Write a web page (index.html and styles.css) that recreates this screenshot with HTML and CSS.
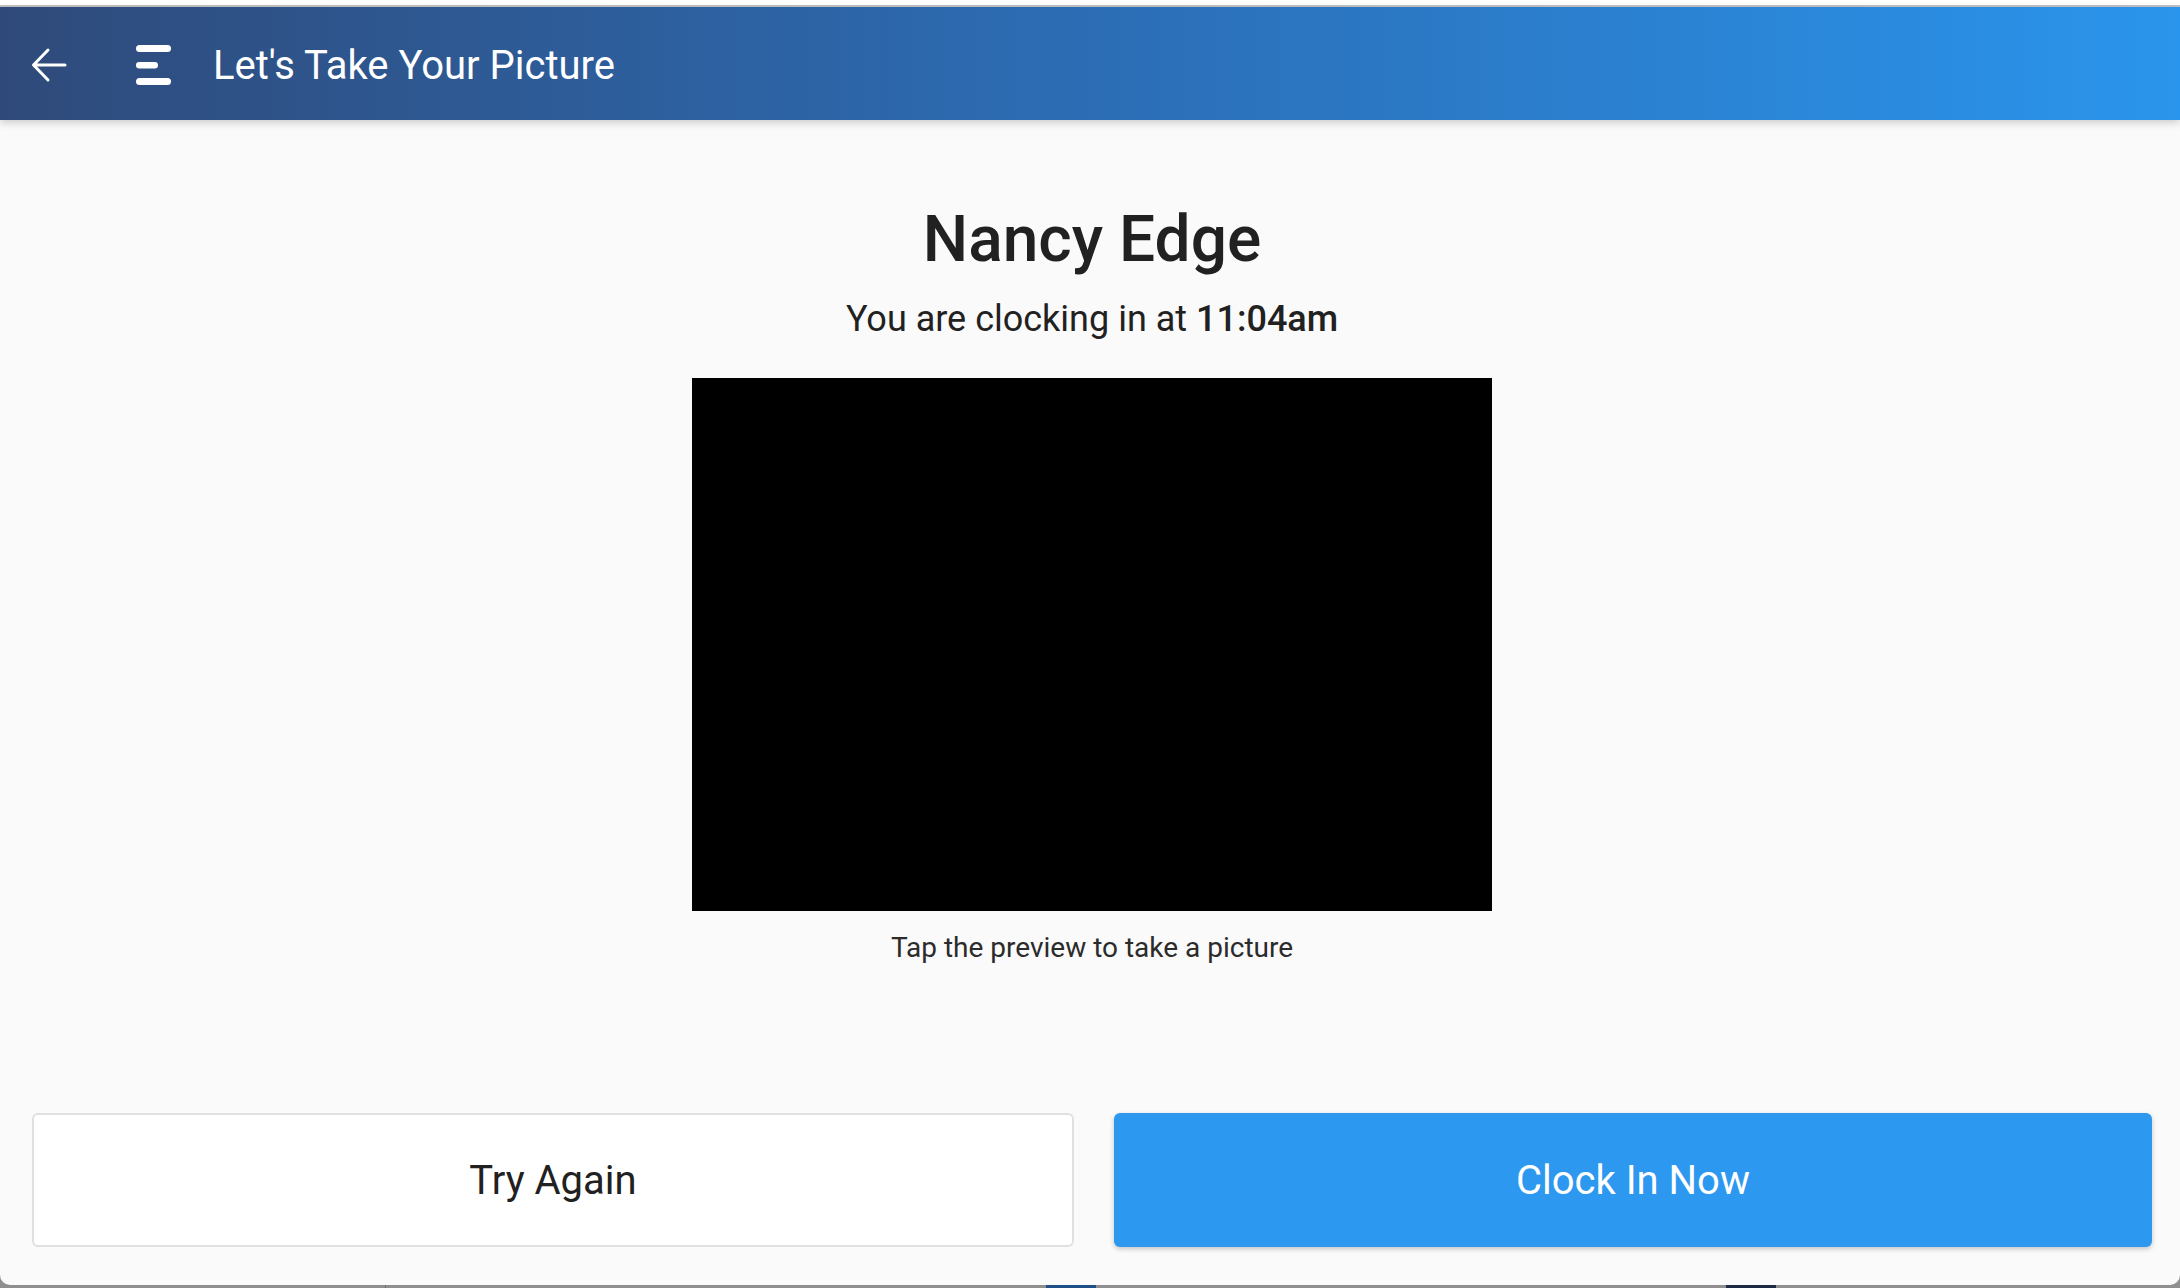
FILE: index.html
```html
<!DOCTYPE html>
<html lang="en">
<head>
    <meta charset="UTF-8">
    <meta name="viewport" content="width=device-width, initial-scale=1.0">
    <title>Let's Take Your Picture</title>
    <link rel="stylesheet" href="styles.css">
</head>
<body>
    <!-- Clock-in dialog, sits over the dashboard -->
    <div class="dialog">
        <header class="topbar">
            <button class="icon-btn back-btn" aria-label="Back">
                <svg width="36" height="36" viewBox="0 0 36 36">
                    <path d="M34 18H3M17 3L2.5 18L17 33" fill="none" stroke="#fff" stroke-width="3" stroke-linecap="round" stroke-linejoin="round"/>
                </svg>
            </button>
            <button class="icon-btn menu-btn" aria-label="Menu">
                <svg width="36" height="40" viewBox="0 0 36 40">
                    <rect x="0" y="0" width="35" height="7" rx="3.5" fill="#fff"/>
                    <rect x="0" y="17" width="22" height="6.5" rx="3.2" fill="#fff"/>
                    <rect x="0" y="33" width="35" height="7" rx="3.5" fill="#fff"/>
                </svg>
            </button>
            <h1 class="topbar-title">Let's Take Your Picture</h1>
        </header>

        <main class="content">
            <h2 class="employee-name">Nancy Edge</h2>
            <p class="clock-time">You are clocking in at <strong>11:04am</strong></p>

            <div class="preview" id="preview"></div>
            <p class="hint">Tap the preview to take a picture</p>
        </main>

        <footer class="actions">
            <button class="btn btn-secondary">Try Again</button>
            <button class="btn btn-primary">Clock In Now</button>
        </footer>
    </div>

    <!-- bit of the page behind the dialog -->
    <div class="backdrop">
        <span class="bd-line"></span>
        <span class="bd-block"></span>
        <span class="bd-block dark"></span>
    </div>
</body>
</html>
```

FILE: styles.css
```css
html, body {
    margin: 0;
    padding: 0;
}

body {
    font-family: Roboto, "Liberation Sans", Arial, sans-serif;
    background: #ffffff;
    color: #212121;
    width: 2180px;
    height: 1288px;
    overflow: hidden;
    display: flex;
    flex-direction: column;
}

.dialog {
    margin-top: 5px;
    height: 1278px;
    background-color: #fafafa;
    border-top: 2px solid #c2c2c2;
    border-radius: 0 0 10px 10px;
    display: flex;
    flex-direction: column;
    position: relative;
    z-index: 1;
}

/* top bar */
.topbar {
    height: 113px;
    flex-shrink: 0;
    display: flex;
    align-items: center;
    padding-left: 31px;
    padding-top: 2px;
    box-sizing: border-box;
    background: linear-gradient(90deg, #2f4a7a 0%, #2c6db5 50%, #2a95ec 100%);
    box-shadow: 0 3px 8px rgba(0, 0, 0, 0.18);
    position: relative;
    z-index: 2;
}

.icon-btn {
    background: none;
    border: none;
    padding: 0;
    cursor: pointer;
    display: flex;
}

.menu-btn {
    margin-left: 69px;
}

.topbar-title {
    margin: 3px 0 0 41px;
    font-size: 40px;
    font-weight: 400;
    color: #ffffff;
    line-height: 1;
}

/* main area */
.content {
    display: flex;
    flex-direction: column;
    align-items: center;
    padding-top: 80px;
    padding-left: 4px;
}

.employee-name {
    margin: 0;
    font-size: 64px;
    font-weight: 500;
    line-height: 1.25;
}

.clock-time {
    margin: 18px 0 0;
    font-size: 36px;
    line-height: 1.2;
}

.clock-time strong {
    font-weight: 500;
}

.preview {
    width: 800px;
    height: 533px;
    margin-top: 37px;
    background-color: #000000;
    cursor: pointer;
}

.hint {
    margin: 20px 0 0;
    font-size: 28px;
    line-height: 1.2;
    color: #2b2b2b;
}

/* buttons */
.actions {
    margin-top: auto;
    display: flex;
    gap: 40px;
    padding: 0 28px 38px 32px;
}

.btn {
    flex: 1;
    height: 134px;
    font-family: inherit;
    font-size: 40px;
    border-radius: 6px;
    cursor: pointer;
}

.btn-secondary {
    background-color: #ffffff;
    color: #212121;
    border: 2px solid #e0e0e0;
}

.btn-primary {
    background-color: #2d98ef;
    color: #ffffff;
    border: none;
    box-shadow: 0 2px 5px rgba(0, 0, 0, 0.22);
}

/* page behind */
.backdrop {
    flex: 1;
    margin-top: -12px;
    padding-top: 12px;
    background-color: #8f8f8f;
    display: flex;
    align-items: stretch;
}

.bd-line {
    width: 1px;
    margin-left: 385px;
    background-color: #6f6f6f;
}

.bd-block {
    width: 50px;
    margin-left: 660px;
    background-color: #1f4f86;
}

.bd-block.dark {
    margin-left: 630px;
    background-color: #1c2a44;
}
```
